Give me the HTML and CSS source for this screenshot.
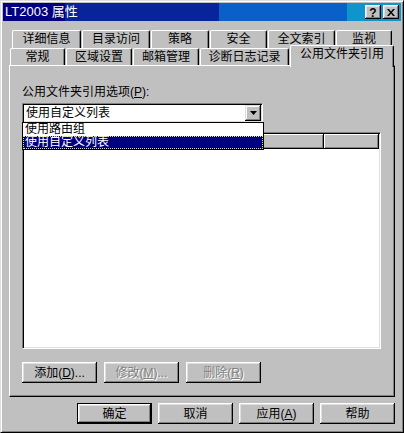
FILE: index.html
```html
<!DOCTYPE html>
<html lang="zh-CN">
<head>
<meta charset="utf-8">
<title>LT2003 属性</title>
<link rel="stylesheet" href="styles.css">
</head>
<body>
<div class="window">
  <div class="titlebar">
    <span class="title">LT2003 属性</span>
    <div class="caps">
      <span class="capbtn help">?</span>
      <span class="capbtn close"><svg width="8" height="7" viewBox="0 0 8 7"><path d="M0 0h2l2 2.5L6 0h2L5 3.5 8 7H6L4 4.5 2 7H0l3-3.5z" fill="#000"/></svg></span>
    </div>
  </div>
  <div class="content">
    <div class="tabs">
      <div class="tabrow back">
        <div class="tab w1">详细信息</div>
        <div class="tab w2">目录访问</div>
        <div class="tab w3">策略</div>
        <div class="tab w4">安全</div>
        <div class="tab w5">全文索引</div>
        <div class="tab w6">监视</div>
      </div>
      <div class="tabrow front">
        <div class="tab f1">常规</div>
        <div class="tab f2">区域设置</div>
        <div class="tab f3">邮箱管理</div>
        <div class="tab f4">诊断日志记录</div>
        <div class="tab f5 active">公用文件夹引用</div>
      </div>
    </div>
    <div class="panel">
      <div class="label">公用文件夹引用选项(<u>P</u>):</div>
      <div class="combo-wrap">
        <div class="combo">
          <span class="combo-text">使用自定义列表</span>
          <span class="dropbtn"><svg width="7" height="4" viewBox="0 0 7 4"><path d="M0 0h7L3.5 4z" fill="#000"/></svg></span>
        </div>
        <div class="droplist">
          <div class="item">使用路由组</div>
          <div class="item sel">使用自定义列表</div>
        </div>
      </div>
      <div class="listview">
        <div class="lvheader">
          <div class="col c1"></div>
          <div class="col c2"></div>
        </div>
      </div>
      <div class="btnrow">
        <div class="btn">添加(<u>D</u>)...</div>
        <div class="btn disabled">修改(<u>M</u>)...</div>
        <div class="btn disabled">删除(<u>R</u>)</div>
      </div>
    </div>
    <div class="footer">
      <div class="btn default">确定</div>
      <div class="btn">取消</div>
      <div class="btn">应用(<u>A</u>)</div>
      <div class="btn">帮助</div>
    </div>
  </div>
</div>
</body>
</html>
```
FILE: styles.css
```css
* { box-sizing: border-box; }
html, body { margin: 0; padding: 0; }
body {
  font-family: "Liberation Sans", "Noto Sans CJK SC", sans-serif;
  font-size: 12px;
  color: #000;
  background: #c0c0c0;
}
.window {
  width: 404px;
  height: 433px;
  background: #c0c0c0;
  border: 1px solid;
  border-color: #dfdfdf #000 #000 #dfdfdf;
  box-shadow: inset 1px 1px #fff, inset -1px -1px #808080;
  padding: 2px;
}
.titlebar {
  height: 18px;
  display: flex;
  align-items: center;
  padding-left: 2px;
  padding-right: 2px;
  color: #fff;
  background: linear-gradient(to right,
    #000080 0px, #000080 62px,
    #08249a 62px, #08249a 216px,
    #0860c8 216px, #0860c8 344px,
    #1094cc 344px, #1094cc 100%);
}
.title { line-height: 18px; font-size: 13px; }
.caps { margin-left: auto; display: flex; gap: 2px; }
.capbtn {
  width: 16px;
  height: 14px;
  background: #c0c0c0;
  box-shadow: inset -1px -1px #000, inset 1px 1px #fff, inset -2px -2px #808080, inset 2px 2px #dfdfdf;
  display: flex;
  align-items: center;
  justify-content: center;
  color: #000;
  font-weight: bold;
  font-size: 12px;
  line-height: 14px;
}
.capbtn.help { padding-top: 1px; }
.content { padding: 0 6px 0 6px; }
.tabs { margin-top: 9px; }
.tabrow { display: flex; gap: 1px; }
.tabrow.back { height: 18px; padding-left: 3px; }
.tabrow.front { height: 20px; margin-top: -3px; padding-left: 1px; align-items: flex-end; }
.tab {
  height: 18px;
  background: #c0c0c0;
  border-top: 1px solid #fff;
  border-left: 1px solid #fff;
  border-right: 1px solid #000;
  border-radius: 2px 2px 0 0;
  box-shadow: inset -1px 0 #808080;
  text-align: center;
  line-height: 17px;
  white-space: nowrap;
}
.front .tab { height: 17px; line-height: 16px; }
.w1 { width: 69px; }
.w2 { width: 68px; }
.w3 { width: 58px; }
.w4 { width: 57px; }
.w5 { width: 67px; }
.w6 { width: 56px; }
.f1 { width: 55px; }
.f2 { width: 66px; }
.f3 { width: 66px; }
.f4 { width: 89px; }
.f5 { width: 104px; }
.tab.active {
  height: 22px;
  margin-bottom: -2px;
  position: relative;
  z-index: 1;
  line-height: 16px;
}
.panel {
  width: 386px;
  height: 332px;
  border-top: 1px solid #fff;
  border-left: 1px solid #fff;
  border-right: 1px solid #000;
  border-bottom: 1px solid #000;
  box-shadow: inset -1px -1px #808080;
  padding: 19px 0 0 12px;
}
.label { height: 14px; line-height: 14px; white-space: nowrap; }
.combo-wrap { position: relative; margin-top: 4px; width: 241px; }
.combo {
  width: 241px;
  height: 20px;
  border: 1px solid;
  border-color: #808080 #fff #fff #808080;
  box-shadow: inset 1px 1px #000, inset -1px -1px #dfdfdf;
  padding: 1px;
  background: #fff;
  display: flex;
}
.combo-text { flex: 1; padding-left: 2px; line-height: 16px; }
.dropbtn {
  width: 16px;
  height: 16px;
  background: #c0c0c0;
  box-shadow: inset -1px -1px #000, inset 1px 1px #dfdfdf, inset -2px -2px #808080, inset 2px 2px #fff;
  display: flex;
  align-items: center;
  justify-content: center;
  padding-left: 1px;
}
.droplist {
  position: absolute;
  left: 0;
  top: 19px;
  width: 242px;
  border: 1px solid #000;
  background: #fff;
  z-index: 2;
}
.item { height: 13px; line-height: 13px; padding-left: 2px; white-space: nowrap; }
.item.sel {
  background: #000080;
  color: #fff;
  outline: 1px dotted #e0e090;
  outline-offset: -1px;
}
.listview {
  margin-top: 9px;
  width: 359px;
  height: 217px;
  background: #fff;
  border: 1px solid;
  border-color: #808080 #fff #fff #808080;
  box-shadow: inset 1px 1px #000, inset -1px -1px #dfdfdf;
  padding: 1px;
}
.lvheader { display: flex; height: 15px; }
.col {
  height: 15px;
  background: #c0c0c0;
  box-shadow: inset -1px -1px #000, inset 1px 1px #fff, inset -2px -2px #808080;
}
.c1 { width: 300px; }
.c2 { width: 55px; }
.btnrow { display: flex; gap: 7px; margin-top: 13px; }
.btn {
  width: 75px;
  height: 21px;
  background: #c0c0c0;
  box-shadow: inset -1px -1px #000, inset 1px 1px #fff, inset -2px -2px #808080, inset 2px 2px #dfdfdf;
  display: flex;
  align-items: center;
  justify-content: center;
  white-space: nowrap;
  line-height: 14px;
}
.btn.disabled { color: #808080; text-shadow: 1px 1px #fff; }
.btn.default {
  border: 1px solid #000;
  box-shadow: inset -1px -1px #000, inset 1px 1px #fff, inset -2px -2px #808080, inset 2px 2px #dfdfdf;
}
.footer { display: flex; justify-content: flex-end; gap: 6px; margin-top: 6px; }
```
